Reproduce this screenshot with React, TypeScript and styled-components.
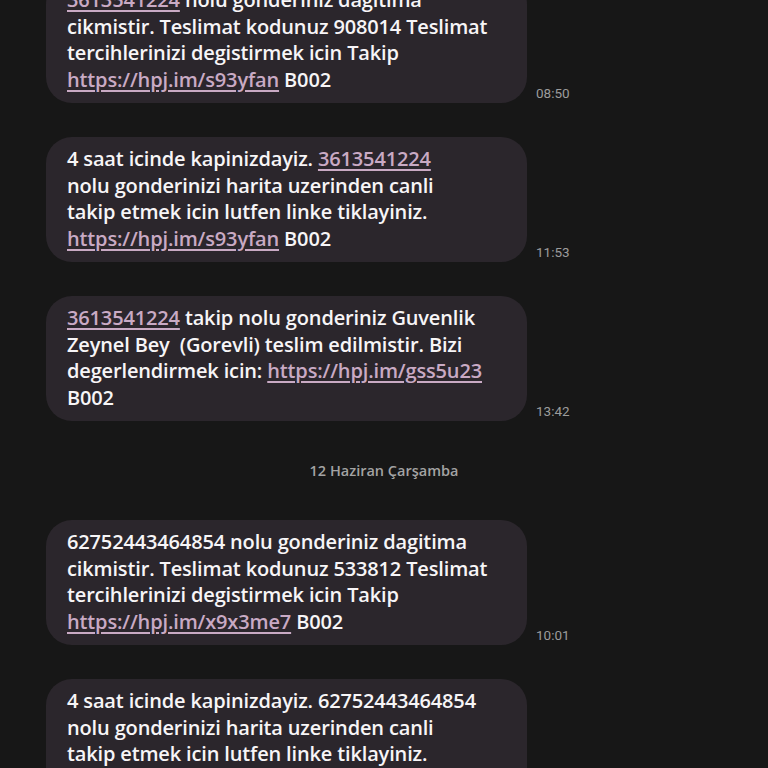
import React from "react";
import styled, { createGlobalStyle } from "styled-components";

const Global = createGlobalStyle`
  html, body { margin: 0; padding: 0; background: #171717; }
  body { width: 768px; height: 768px; overflow: hidden; font-family: "Open Sans", "Noto Sans", sans-serif; }
`;

const Screen = styled.div`
  width: 768px;
  height: 768px;
  overflow: hidden;
  background: #171717;
`;

const Thread = styled.div`
  display: flex;
  flex-direction: column;
  gap: 34px;
  padding-left: 46px;
  margin-top: -22px;
`;

const Row = styled.div`
  display: flex;
  align-items: flex-end;
  gap: 9px;
`;

const Bubble = styled.div`
  box-sizing: border-box;
  width: 481px;
  background: #2b262c;
  border-radius: 26px;
  padding: 9px 14px 10px 21px;
  color: #f7f5f7;
  font-size: 20px;
  font-weight: 600;
  line-height: 26.5px;
  letter-spacing: -0.15px;
  white-space: pre-wrap;
`;

const Link = styled.span`
  color: #c9aac4;
  text-decoration: underline;
  text-decoration-thickness: 1.5px;
  text-underline-offset: 3px;
`;

const Time = styled.div`
  color: #9c9c9c;
  font-family: "Roboto", sans-serif;
  font-size: 13.5px;
  margin-bottom: 2px;
`;

const DateLabel = styled.div`
  align-self: stretch;
  margin-left: -46px;
  text-align: center;
  color: #a3a3a3;
  font-size: 14.5px;
  font-weight: 600;
  line-height: 31px;
  height: 31px;
`;

type Part = string | { link: string };

const Msg = ({ parts, time }: { parts: Part[]; time?: string }) => (
  <Row>
    <Bubble>
      {parts.map((p, i) =>
        typeof p === "string" ? <React.Fragment key={i}>{p}</React.Fragment> : <Link key={i}>{p.link}</Link>
      )}
    </Bubble>
    {time && <Time>{time}</Time>}
  </Row>
);

export default function App() {
  return (
    <Screen>
      <Global />
      <Thread>
        <Msg
          time="08:50"
          parts={[
            { link: "3613541224" },
            " nolu gonderiniz dagitima\ncikmistir. Teslimat kodunuz 908014 Teslimat\ntercihlerinizi degistirmek icin Takip\n",
            { link: "https://hpj.im/s93yfan" },
            " B002",
          ]}
        />
        <Msg
          time="11:53"
          parts={[
            "4 saat icinde kapinizdayiz. ",
            { link: "3613541224" },
            "\nnolu gonderinizi harita uzerinden canli\ntakip etmek icin lutfen linke tiklayiniz.\n",
            { link: "https://hpj.im/s93yfan" },
            " B002",
          ]}
        />
        <Msg
          time="13:42"
          parts={[
            { link: "3613541224" },
            " takip nolu gonderiniz Guvenlik\nZeynel Bey  (Gorevli) teslim edilmistir. Bizi\ndegerlendirmek icin: ",
            { link: "https://hpj.im/gss5u23" },
            "\nB002",
          ]}
        />
        <DateLabel>12 Haziran Çarşamba</DateLabel>
        <Msg
          time="10:01"
          parts={[
            "62752443464854 nolu gonderiniz dagitima\ncikmistir. Teslimat kodunuz 533812 Teslimat\ntercihlerinizi degistirmek icin Takip\n",
            { link: "https://hpj.im/x9x3me7" },
            " B002",
          ]}
        />
        <Msg
          parts={[
            "4 saat icinde kapinizdayiz. 62752443464854\nnolu gonderinizi harita uzerinden canli\ntakip etmek icin lutfen linke tiklayiniz.\n",
            { link: "https://hpj.im/s93yfan" },
            " B002",
          ]}
        />
      </Thread>
    </Screen>
  );
}
